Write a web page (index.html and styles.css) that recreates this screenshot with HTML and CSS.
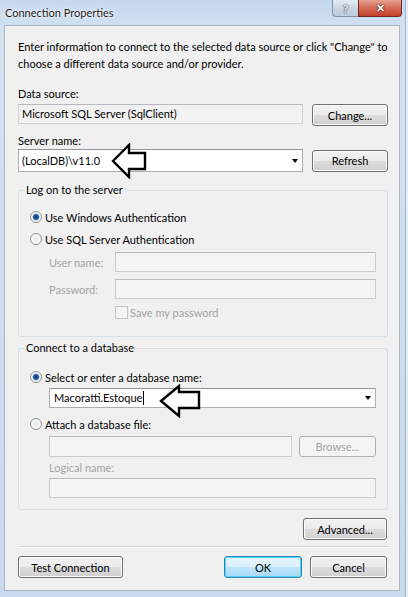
FILE: index.html
```html
<!DOCTYPE html>
<html>
  <head>
    <title>Connection Properties</title>
    <link rel="stylesheet" href="styles.css">
  </head>
  <body>

	<div class="window">
		<div class="titlebar">
			<span class="title">Connection Properties</span>
			<div class="caption">
				<span class="cap help">?</span>
				<span class="cap close">&#x2715;</span>
			</div>
		</div>

		<div class="client">
			<p class="intro">Enter information to connect to the selected data source or click "Change" to<br />choose a different data source and/or provider.</p>

			<div class="label lbl-source">Data source:</div>
			<div class="row row-source">
				<div class="field readonly">Microsoft SQL Server (SqlClient)</div>
				<button class="btn">Change...</button>
			</div>

			<div class="label lbl-server">Server name:</div>
			<div class="row row-server">
				<div class="field combo">(LocalDB)\v11.0<span class="drop"></span></div>
				<button class="btn">Refresh</button>
			</div>

			<fieldset class="group group-logon">
				<legend>Log on to the server</legend>
				<div class="opt"><span class="radio checked"></span>Use Windows Authentication</div>
				<div class="opt"><span class="radio"></span>Use SQL Server Authentication</div>
				<div class="cred cred-user">
					<span class="cred-label">User name:</span>
					<div class="field disabled"></div>
				</div>
				<div class="cred cred-pass">
					<span class="cred-label">Password:</span>
					<div class="field disabled"></div>
				</div>
				<div class="save"><span class="check"></span>Save my password</div>
			</fieldset>

			<fieldset class="group group-db">
				<legend>Connect to a database</legend>
				<div class="opt"><span class="radio checked"></span>Select or enter a database name:</div>
				<div class="field combo db-name">Macoratti.Estoque<span class="caret"></span><span class="drop"></span></div>
				<div class="opt opt-attach"><span class="radio"></span>Attach a database file:</div>
				<div class="row row-file">
					<div class="field disabled"></div>
					<button class="btn btn-disabled">Browse...</button>
				</div>
				<div class="label lbl-logical">Logical name:</div>
				<div class="field disabled logical"></div>
			</fieldset>

			<div class="advanced-row">
				<button class="btn btn-advanced">Advanced...</button>
			</div>

			<div class="separator"></div>

			<div class="footer">
				<button class="btn btn-test">Test Connection</button>
				<span class="spacer"></span>
				<button class="btn btn-ok">OK</button>
				<button class="btn btn-cancel">Cancel</button>
			</div>
		</div>

		<!-- callout arrows drawn over the form -->
		<svg class="pointer pointer-server" width="36" height="36" viewBox="0 0 36 36">
			<path d="M2 18 L18 2 L18 10 L34 10 L34 26 L18 26 L18 34 Z" fill="#fff" stroke="#000" stroke-width="2.4" stroke-linejoin="miter" />
		</svg>
		<svg class="pointer pointer-db" width="42" height="34" viewBox="0 0 42 34">
			<path d="M2 17 L20 2 L20 8 L40 8 L40 24 L20 24 L20 32 Z" fill="#fff" stroke="#000" stroke-width="2.4" stroke-linejoin="miter" />
		</svg>
	</div>

  </body>
</html>
```

FILE: styles.css
```css
body { margin: 0; background: #e6edf5; font-family: Lato, "Noto Sans", sans-serif; font-size: 11px; color: #000; }

.window { position: relative; width: 406px; height: 597px; box-sizing: border-box; padding: 25px 5px 6px 4px; background: linear-gradient(to bottom, #c4d8ee 0, #d3e2f3 30px, #c7daee 100%); border-right: 1px solid #9fb3cb; }

/* title bar */
.titlebar { position: absolute; top: 0; left: 0; right: 0; height: 25px; }
.title { position: absolute; left: 5px; top: 5px; line-height: 16px; color: #1b1b1b; text-shadow: 0 0 4px #fff, 0 0 2px #fff; }
.caption { position: absolute; top: 0; left: 332px; display: flex; }
.cap { height: 17px; box-sizing: border-box; display: flex; align-items: center; justify-content: center; font-weight: bold; }
.help { width: 26px; border: 1px solid #8393a8; border-top: none; border-right: none; border-radius: 0 0 0 4px; background: linear-gradient(to bottom, #e4ebf3, #c9d5e3 55%, #bccbdc); color: #eef2f7; text-shadow: 0 0 1px #333, 0 0 2px #555; font-size: 12px; }
.close { width: 44px; border: 1px solid #6e2a20; border-top: none; border-radius: 0 0 4px 0; background: linear-gradient(to bottom, #e8a293, #d56a55 50%, #c4412b); color: #fff; text-shadow: 0 0 1px #400, 0 0 2px #500; font-size: 11px; }

/* client area */
.client { height: 566px; box-sizing: border-box; background: #f0f0f0; border: 1px solid #a9b6c6; padding: 12px 11px 12px 13px; display: flex; flex-direction: column; }

.intro { margin: 0; line-height: 17px; white-space: nowrap; }

.label { line-height: 16px; }
.lbl-source { margin-top: 14px; }
.lbl-server { margin-top: 7px; }
.lbl-logical { margin-top: 3px; color: #a3a3a3; }

.row { display: flex; align-items: center; gap: 9px; }
.row-source { margin-top: 2px; align-items: flex-start; }
.row-source .field { height: 20px; }
.row-source .btn { height: 22px; }
.row-server .field { height: 23px; }

.field { flex: 1; box-sizing: border-box; height: 20px; border: 1px solid #abadb3; border-top-color: #8f959c; background: #fff; padding: 0 3px; display: flex; align-items: center; line-height: 16px; white-space: nowrap; }
.readonly { background: #f2f2f2; border-color: #cdd0d5; border-top-color: #b6bac0; }
.disabled { background: #f4f4f4; border-color: #c9cdd2; border-top-color: #b8bcc2; }
.combo { position: relative; }
.drop { margin-left: auto; margin-right: 1px; width: 0; height: 0; border-left: 3.5px solid transparent; border-right: 3.5px solid transparent; border-top: 4px solid #000; }
.caret { width: 1px; height: 14px; background: #000; margin-left: 1px; }

/* buttons */
.btn { box-sizing: border-box; width: 76px; height: 22px; margin: 0; padding: 0; font: inherit; color: #000; border: 1px solid #707070; border-radius: 3px; background: linear-gradient(to bottom, #f2f2f2 0, #ebebeb 50%, #dddddd 50%, #cfcfcf 100%); box-shadow: inset 0 0 0 1px #fcfcfc; }
.btn-disabled { color: #a3a3a3; border-color: #adb2b5; background: #f4f4f4; box-shadow: none; }

/* group boxes */
.group { margin: 0; padding: 0 11px 0 11px; border: 1px solid #d5dfe5; border-radius: 3px; min-width: 0; }
.group legend { margin-left: -6px; padding: 0 2px; line-height: 16px; }
.group-logon { margin-top: 10px; padding-top: 8px; padding-bottom: 16px; }
.group-db { margin-top: 3px; padding-top: 11px; padding-bottom: 11px; }

.opt { display: flex; align-items: center; height: 22px; }
.group-db .opt { height: 20px; }
.opt-attach { margin-top: 6px; }

.radio { width: 12px; height: 12px; box-sizing: border-box; border-radius: 50%; border: 1px solid #8e8f8f; background: radial-gradient(circle, #e6e6e6 0, #fbfbfb 70%); margin-right: 3px; }
.radio.checked { background: radial-gradient(circle, #0d2b57 0, #2266b3 2.5px, #7aa8da 3.2px, #f6f6f6 3.8px); }

.cred { display: flex; align-items: center; margin-left: 19px; }
.cred-user { margin-top: 2px; }
.cred-pass { margin-top: 7px; }
.cred-label { width: 66px; color: #a3a3a3; }
.cred .field { height: 20px; }

.save { display: flex; align-items: center; height: 16px; margin-top: 5px; margin-left: 85px; color: #a3a3a3; }
.check { width: 13px; height: 13px; box-sizing: border-box; border: 1px solid #c4c4c4; background: #f4f4f4; margin-right: 2px; }

.db-name { margin: 1px 0 0 19px; height: 20px; padding-left: 4px; flex: none; }
.row-file { margin: 2px 0 0 19px; gap: 7px; }
.row-file .field { height: 21px; }
.row-file .btn { width: 77px; height: 21px; }
.group-db .lbl-logical { margin-left: 19px; }
.logical { margin: 2px 0 0 19px; flex: none; height: 20px; }

/* bottom */
.advanced-row { display: flex; justify-content: flex-end; margin-top: 8px; padding-right: 1px; }
.btn-advanced { width: 84px; }

.separator { margin-top: 6px; height: 2px; border-top: 1px solid #d5d5d5; border-bottom: 1px solid #ffffff; box-sizing: border-box; }

.footer { display: flex; margin-top: 8px; gap: 8px; padding-right: 1px; }
.spacer { flex: 1; }
.btn-test { width: 105px; }
.btn-ok { width: 78px; border-color: #3c7fb1; box-shadow: inset 0 0 0 1px #48d8fb; background: linear-gradient(to bottom, #eaf6fd 0, #d9f0fc 50%, #bee6fd 50%, #a7d9f5 100%); }
.btn-cancel { width: 77px; }

/* callouts */
.pointer { position: absolute; }
.pointer-server { left: 111px; top: 143px; }
.pointer-db { left: 159px; top: 384px; }
```
